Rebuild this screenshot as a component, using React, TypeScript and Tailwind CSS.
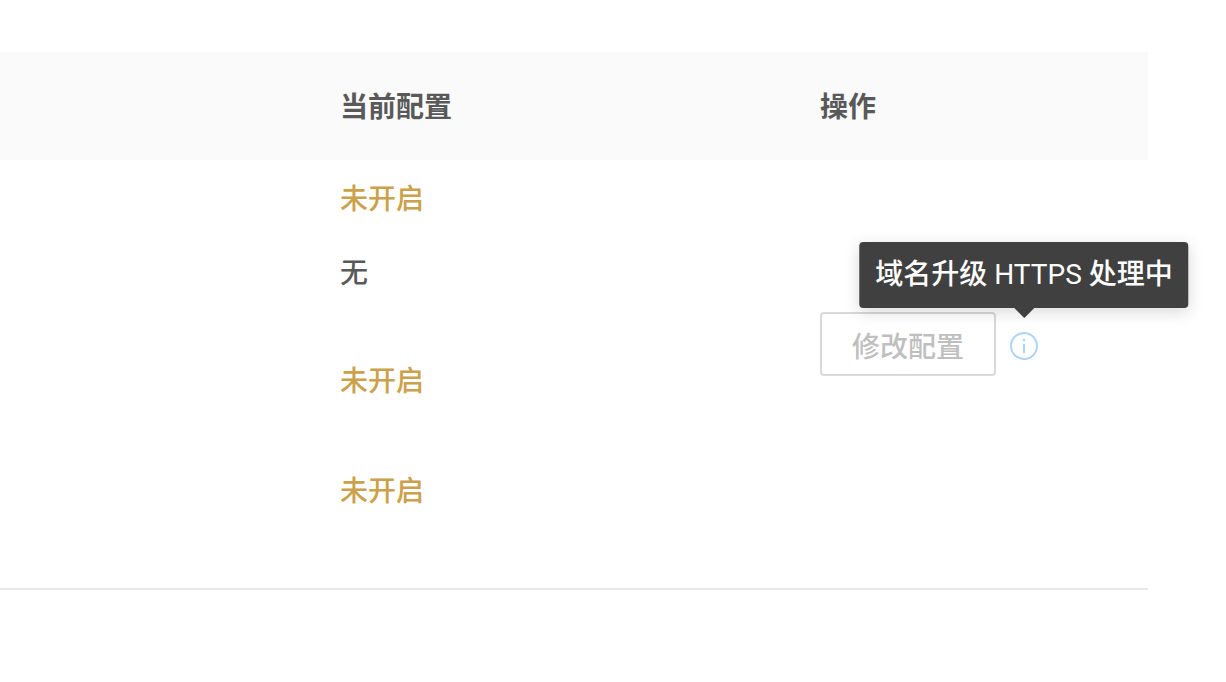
const values = [
  { text: "未开启", off: true, space: "h-[74px]" },
  { text: "无", off: false, space: "h-[108px]" },
  { text: "未开启", off: true, space: "h-[110px]" },
  { text: "未开启", off: true, space: "h-[114px]" },
];

export default function App() {
  return (
    <main className="bg-white pt-[52px] pr-[78px] font-[Roboto,'Noto_Sans_CJK_SC',sans-serif] text-[28px] leading-9 font-medium text-[#595959]">
      <table className="w-full table-fixed border-collapse text-left">
        <thead>
          <tr className="h-[108px] bg-[#fafafa]">
            <th className="pt-1 pl-[340px] font-semibold">当前配置</th>
            <th className="w-[328px] pt-1 font-semibold">操作</th>
          </tr>
        </thead>
        <tbody>
          <tr className="border-b-2 border-[#e8e8ec]">
            <td className="pt-[22px] pl-[340px] align-top">
              {values.map((value, i) => (
                <p
                  key={i}
                  className={`${value.space} ${value.off ? "text-[#cba14b]" : ""}`}
                >
                  {value.text}
                </p>
              ))}
            </td>
            <td className="pt-[152px] align-top">
              <div className="flex items-center gap-[14px]">
                <button
                  type="button"
                  disabled
                  className="h-16 rounded border-2 border-[#d9d9d9] px-[30px] pt-2 text-[#bfbfbf]"
                >
                  修改配置
                </button>
                <span className="relative mt-1">
                  <svg viewBox="0 0 28 28" className="size-7" fill="none" stroke="#b0d3f8" strokeWidth="2">
                    <circle cx="14" cy="14" r="13" />
                    <path d="M14 12v9" />
                    <path d="M12.8 8h2.4" strokeWidth="2.4" />
                  </svg>
                  <span
                    role="tooltip"
                    className="absolute bottom-full left-1/2 mb-6 h-[66px] -translate-x-1/2 rounded bg-[#404040] px-4 leading-[66px] whitespace-nowrap text-white shadow-[0_4px_16px_rgba(0,0,0,0.15)]"
                  >
                    域名升级 <span className="font-normal">HTTPS</span> 处理中
                    <span className="absolute top-full left-1/2 -translate-x-1/2 border-x-10 border-t-10 border-x-transparent border-t-[#404040]" />
                  </span>
                </span>
              </div>
            </td>
          </tr>
        </tbody>
      </table>
    </main>
  );
}
